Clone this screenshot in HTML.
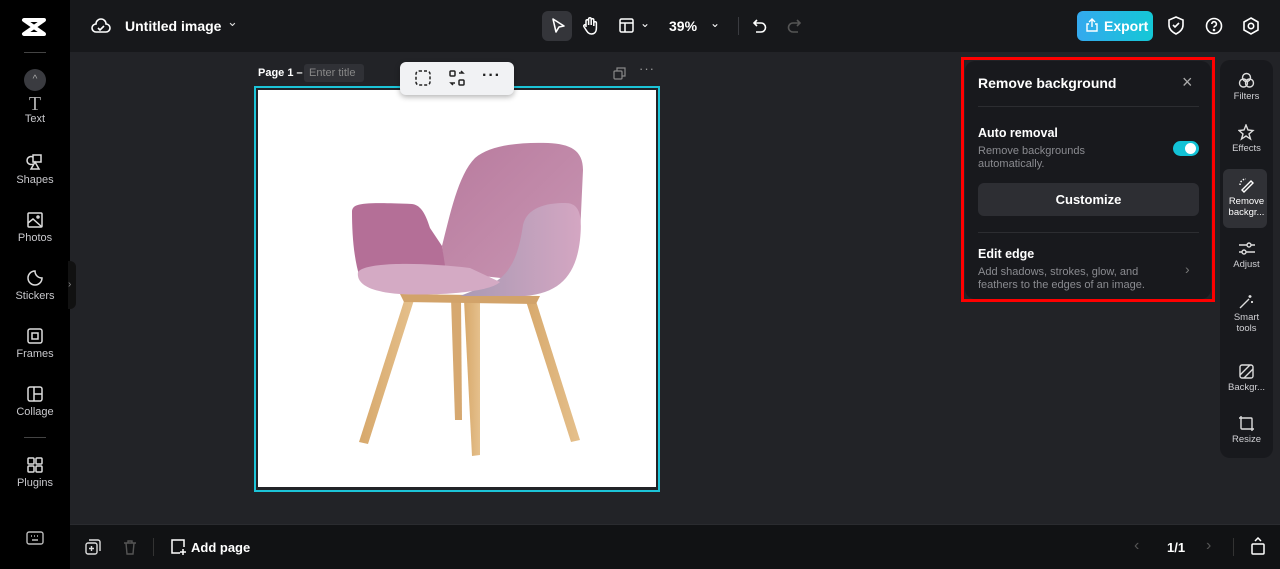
<!DOCTYPE html>
<html><head><meta charset="utf-8"><style>
*{margin:0;padding:0;box-sizing:border-box}
body{width:1280px;height:569px;overflow:hidden;background:#222327;font-family:"Liberation Sans",sans-serif;color:#fff;position:relative}
.abs{position:absolute}
.side{left:0;top:0;width:70px;height:569px;background:#000}
.si{position:absolute;left:0;width:70px;text-align:center;font-size:11px;color:#c8c8cc}
.si svg{display:block;margin:0 auto 3px}
.top{left:70px;top:0;width:1210px;height:52px;background:#17181b}
.bot{left:70px;top:524px;width:1210px;height:45px;background:#111214;border-top:1px solid #2a2b2f}
.panel{left:965px;top:61px;width:246px;height:238px;background:#18191d;border-radius:10px}
.red{left:961px;top:57px;width:254px;height:245px;border:3px solid #f00}
.rt{left:1220px;top:60px;width:53px;height:398px;background:#18191d;border-radius:10px}
.ri{position:absolute;left:0;width:53px;text-align:center;font-size:9.5px;color:#d0d0d4;line-height:11px}
.ri svg{display:block;margin:0 auto 2px}
</style></head><body>
<div class="abs side">
 <svg class="abs" style="left:21px;top:16px" width="26" height="22" viewBox="0 0 26 22"><path d="M3 4 L23 4 L3 18 L23 18 Z" fill="none" stroke="#fff" stroke-width="4" stroke-linejoin="round"/></svg>
 <div class="abs" style="left:24px;top:52px;width:22px;height:1px;background:#444"></div>
 <div class="abs" style="left:24px;top:69px;width:22px;height:22px;border-radius:50%;background:#3a3b40;color:#aaa;font-size:10px;text-align:center;line-height:22px">^</div>
 <div class="si" style="top:95px"><span style="font-family:'Liberation Serif';font-size:20px;color:#aaa;display:block;line-height:18px">T</span>Text</div>
 <div class="si" style="top:153px"><svg width="18" height="18" viewBox="0 0 18 18" fill="none" stroke="#ddd" stroke-width="1.5"><path d="M7 4a4 4 0 1 0 0 7"/><rect x="7" y="2" width="8" height="7"/><path d="M9 9l-4 7h8z"/></svg>Shapes</div>
 <div class="si" style="top:211px"><svg width="18" height="18" viewBox="0 0 18 18" fill="none" stroke="#ddd" stroke-width="1.5"><rect x="2" y="2" width="14" height="14" rx="1"/><path d="M2 12l5-4 9 8"/><circle cx="12" cy="6" r="1"/></svg>Photos</div>
 <div class="si" style="top:269px"><svg width="18" height="18" viewBox="0 0 18 18" fill="none" stroke="#ddd" stroke-width="1.5"><path d="M9 2a7 7 0 1 0 7 7c-4 0-7-3-7-7z"/></svg>Stickers</div>
 <div class="si" style="top:327px"><svg width="18" height="18" viewBox="0 0 18 18" fill="none" stroke="#ddd" stroke-width="1.5"><rect x="2" y="2" width="14" height="14" rx="2"/><rect x="6" y="6" width="6" height="6"/></svg>Frames</div>
 <div class="si" style="top:385px"><svg width="18" height="18" viewBox="0 0 18 18" fill="none" stroke="#ddd" stroke-width="1.5"><rect x="2" y="2" width="14" height="14" rx="2"/><path d="M8 2v14M8 9h8"/></svg>Collage</div>
 <div class="abs" style="left:24px;top:437px;width:22px;height:1px;background:#444"></div>
 <div class="si" style="top:456px"><svg width="18" height="18" viewBox="0 0 18 18" fill="none" stroke="#ddd" stroke-width="1.5"><rect x="2" y="2" width="6" height="6" rx="1"/><rect x="10" y="2" width="6" height="6" rx="1"/><rect x="2" y="10" width="6" height="6" rx="1"/><rect x="10" y="10" width="6" height="6" rx="1"/></svg>Plugins</div>
 <svg class="abs" style="left:26px;top:531px" width="18" height="14" viewBox="0 0 18 14" fill="none" stroke="#bbb" stroke-width="1.4"><rect x="1" y="1" width="16" height="12" rx="2"/><path d="M5 5h1M8 5h1M11 5h1M6 9h6"/></svg>
</div>
<div class="abs" style="left:68px;top:261px;width:8px;height:48px;background:#111;border-radius:0 6px 6px 0;color:#888;font-size:10px;line-height:48px">›</div>
<div class="abs top">
 <svg class="abs" style="left:21px;top:17px" width="20" height="17" viewBox="0 0 20 17" fill="none" stroke="#fff" stroke-width="1.6"><path d="M5 15a4 4 0 0 1 0-8 5 5 0 0 1 10 0 4 4 0 0 1 0 8z"/><path d="M7 11l2 2 4-4"/></svg>
 <div class="abs" style="left:55px;top:18px;font-size:14px;font-weight:bold">Untitled image</div>
 <div class="abs" style="left:157px;top:14px;font-size:13px;color:#ddd">⌄</div>
 <div class="abs" style="left:472px;top:11px;width:30px;height:30px;border-radius:6px;background:#34353a"></div>
 <svg class="abs" style="left:480px;top:17px" width="16" height="17" viewBox="0 0 16 17" fill="none" stroke="#fff" stroke-width="1.6"><path d="M3 2l11 7-5 1-3 5z" stroke-linejoin="round"/></svg>
 <svg class="abs" style="left:512px;top:16px" width="17" height="19" viewBox="0 0 17 19" fill="none" stroke="#fff" stroke-width="1.5"><path d="M4 11V5a1.3 1.3 0 0 1 2.6 0v4V3a1.3 1.3 0 0 1 2.6 0v6V4a1.3 1.3 0 0 1 2.6 0v6V7a1.3 1.3 0 0 1 2.6 0v5c0 4-2 6-5 6-3 0-4-2-6-5l-1.5-2.5a1.2 1.2 0 0 1 2-1.3z"/></svg>
 <svg class="abs" style="left:549px;top:18px" width="15" height="15" viewBox="0 0 15 15" fill="none" stroke="#fff" stroke-width="1.5"><rect x="1" y="1" width="13" height="13" rx="1.5"/><path d="M1 5h13M6 5v9"/></svg>
 <div class="abs" style="left:570px;top:16px;font-size:12px">⌄</div>
 <div class="abs" style="left:599px;top:18px;font-size:14px;font-weight:bold">39%</div>
 <div class="abs" style="left:640px;top:16px;font-size:12px">⌄</div>
 <div class="abs" style="left:668px;top:17px;width:1px;height:18px;background:#3a3b40"></div>
 <svg class="abs" style="left:682px;top:18px" width="16" height="16" viewBox="0 0 16 16" fill="none" stroke="#fff" stroke-width="1.6"><path d="M5 2L2 5l3 3M2 5h7a4.5 4.5 0 0 1 0 9H4"/></svg>
 <svg class="abs" style="left:716px;top:18px" width="16" height="16" viewBox="0 0 16 16" fill="none" stroke="#555" stroke-width="1.6"><path d="M11 2l3 3-3 3M14 5H7a4.5 4.5 0 0 0 0 9h5"/></svg>
 <div class="abs" style="left:1007px;top:11px;width:76px;height:30px;border-radius:6px;background:linear-gradient(90deg,#34a9ee,#14c8d6)"></div>
 <svg class="abs" style="left:1015px;top:18px" width="14" height="14" viewBox="0 0 14 14" fill="none" stroke="#fff" stroke-width="1.4"><path d="M4 6H2v7h10V6h-2M7 9V1M4 4l3-3 3 3"/></svg>
 <div class="abs" style="left:1034px;top:18px;font-size:14px;font-weight:bold">Export</div>
 <svg class="abs" style="left:1097px;top:16px" width="18" height="19" viewBox="0 0 18 19" fill="none" stroke="#fff" stroke-width="1.6"><path d="M9 1l7 3v5c0 4-3 7-7 9-4-2-7-5-7-9V4z"/><path d="M6 9l2 2 4-4"/></svg>
 <svg class="abs" style="left:1135px;top:17px" width="18" height="18" viewBox="0 0 18 18" fill="none" stroke="#fff" stroke-width="1.6"><circle cx="9" cy="9" r="7.5"/><path d="M6.8 7a2.3 2.3 0 1 1 3 2.2c-.6.3-.8.7-.8 1.4"/><circle cx="9" cy="13" r=".5" fill="#fff"/></svg>
 <svg class="abs" style="left:1172px;top:17px" width="18" height="18" viewBox="0 0 18 18" fill="none" stroke="#fff" stroke-width="1.6"><path d="M9 1l7 4v8l-7 4-7-4V5z"/><circle cx="9" cy="9" r="2.7"/></svg>
</div>
<div class="abs" style="left:258px;top:67px;font-size:11px;font-weight:bold">Page 1 –</div>
<div class="abs" style="left:304px;top:64px;width:60px;height:18px;border-radius:3px;background:#303136;color:#888;font-size:11px;line-height:18px;padding-left:5px">Enter title</div>
<svg class="abs" style="left:613px;top:67px" width="13" height="13" viewBox="0 0 13 13" fill="none" stroke="#888" stroke-width="1.2"><rect x="1" y="4" width="8" height="8" rx="1"/><path d="M4 4V1h8v8H9"/></svg>
<div class="abs" style="left:639px;top:61px;color:#999;font-size:13px;letter-spacing:1px">···</div>
<div class="abs" style="left:254px;top:86px;width:406px;height:406px;border:2px solid #1cc4d8"></div>
<div class="abs" style="left:258px;top:90px;width:398px;height:397px;background:#fff"></div>
<svg class="abs" style="left:0;top:0" width="1280" height="569">
 <defs>
  <linearGradient id="pk" x1="0" y1="0" x2="1" y2="1"><stop offset="0" stop-color="#b87b9e"/><stop offset="1" stop-color="#c996b3"/></linearGradient>
  <linearGradient id="pk2" x1="0" y1="0" x2="1" y2="0"><stop offset="0" stop-color="#a99ab4"/><stop offset="1" stop-color="#d4a6c2"/></linearGradient>
  <linearGradient id="wd" x1="0" y1="0" x2="1" y2="0"><stop offset="0" stop-color="#d7a86b"/><stop offset="1" stop-color="#e5c08c"/></linearGradient>
 </defs>
 <path d="M405 298 L414 300 L368 444 L359 442 Z" fill="url(#wd)"/>
 <path d="M525 298 L535 298 L580 440 L571 442 Z" fill="url(#wd)"/>
 <path d="M451 298 L461 298 L462 420 L455 420 Z" fill="#d6a870"/>
 <path d="M464 300 L480 300 L480 455 L472 456 Z" fill="url(#wd)"/>
 <path d="M400 294 L540 296 L536 304 L404 302 Z" fill="#d2a36a"/>
 <path d="M442 246 C450 215 458 175 475 158 C490 145 520 142 548 143 C570 144 583 150 583 170 L580 235 L520 280 L445 272 Z" fill="url(#pk)"/>
 <path d="M352 212 C352 203 362 202 412 204 C420 205 425 212 430 228 L442 246 L446 272 L360 278 C354 260 352 235 352 212 Z" fill="#b46f97"/>
 <path d="M495 282 C515 270 520 245 523 225 C527 208 545 203 565 203 C578 203 583 212 580 240 C576 275 560 293 525 296 L460 296 Z" fill="url(#pk2)"/>
 <path d="M358 272 C365 262 420 262 470 268 L500 282 C490 292 440 296 400 294 C372 292 356 285 358 272 Z" fill="#d4aac4"/>
</svg>
<div class="abs" style="left:400px;top:62px;width:114px;height:33px;background:#f1f2f4;border-radius:6px;box-shadow:0 2px 6px rgba(0,0,0,.3)"></div>
<svg class="abs" style="left:415px;top:70px" width="16" height="16" viewBox="0 0 16 16" fill="none" stroke="#222" stroke-width="1.5" stroke-dasharray="3 2"><rect x="1" y="1" width="14" height="14" rx="3"/></svg>
<svg class="abs" style="left:449px;top:70px" width="16" height="16" viewBox="0 0 16 16" fill="none" stroke="#222" stroke-width="1.5"><rect x="1" y="1" width="5" height="5" rx="1"/><rect x="10" y="10" width="5" height="5" rx="1"/><path d="M10 3h4l-2-2M6 13H2l2 2"/></svg>
<div class="abs" style="left:482px;top:67px;color:#222;font-size:16px;font-weight:bold;letter-spacing:1px">···</div>
<div class="abs panel">
 <div class="abs" style="left:13px;top:14px;font-size:14px;font-weight:bold">Remove background</div>
 <div class="abs" style="left:217px;top:11px;font-size:18px;color:#aaa">×</div>
 <div class="abs" style="left:13px;top:45px;width:221px;height:1px;background:#2c2d31"></div>
 <div class="abs" style="left:13px;top:65px;font-size:12.5px;font-weight:bold">Auto removal</div>
 <div class="abs" style="left:13px;top:84px;font-size:11px;color:#8a8b90;line-height:13px">Remove backgrounds<br>automatically.</div>
 <div class="abs" style="left:208px;top:80px;width:26px;height:15px;border-radius:8px;background:#12c2d6"></div>
 <div class="abs" style="left:220px;top:82px;width:11px;height:11px;border-radius:50%;background:#fff"></div>
 <div class="abs" style="left:13px;top:122px;width:221px;height:33px;border-radius:6px;background:#2d2e33;text-align:center;line-height:33px;font-size:13px;font-weight:bold">Customize</div>
 <div class="abs" style="left:13px;top:171px;width:221px;height:1px;background:#2c2d31"></div>
 <div class="abs" style="left:13px;top:186px;font-size:12.5px;font-weight:bold">Edit edge</div>
 <div class="abs" style="left:13px;top:205px;font-size:11px;color:#8a8b90;line-height:13px">Add shadows, strokes, glow, and<br>feathers to the edges of an image.</div>
 <div class="abs" style="left:220px;top:200px;font-size:14px;color:#777">›</div>
</div>
<div class="abs red"></div>
<div class="abs rt">
 <div class="ri" style="top:12px"><svg width="17" height="17" viewBox="0 0 17 17" fill="none" stroke="#ddd" stroke-width="1.4"><circle cx="8.5" cy="5.5" r="4"/><circle cx="5.5" cy="11" r="4"/><circle cx="11.5" cy="11" r="4"/></svg>Filters</div>
 <div class="ri" style="top:64px"><svg width="17" height="17" viewBox="0 0 17 17" fill="none" stroke="#ddd" stroke-width="1.4"><path d="M8 1l2 5 5 .5-4 3.5 1.5 5L8 12l-4.5 3L5 10 1 6.5 6 6z"/></svg>Effects</div>
 <div class="abs" style="left:3px;top:109px;width:44px;height:59px;border-radius:6px;background:#303136"></div>
 <div class="ri" style="top:117px;color:#fff"><svg width="17" height="17" viewBox="0 0 17 17" fill="none" stroke="#fff" stroke-width="1.4"><path d="M6 15l9-9-2-2-9 9z"/><path d="M2 8a6 6 0 0 1 6-6" stroke-dasharray="1.5 1.5"/></svg>Remove<br>backgr...</div>
 <div class="ri" style="top:180px"><svg width="17" height="17" viewBox="0 0 17 17" fill="none" stroke="#ddd" stroke-width="1.4"><path d="M1 5h16M1 12h16"/><circle cx="11" cy="5" r="2" fill="#18191d"/><circle cx="6" cy="12" r="2" fill="#18191d"/></svg>Adjust</div>
 <div class="ri" style="top:233px"><svg width="17" height="17" viewBox="0 0 17 17" fill="none" stroke="#ddd" stroke-width="1.4"><path d="M2 15l9-9M12 2v3M10.5 3.5h3M14 8v2M13 9h2"/></svg>Smart<br>tools</div>
 <div class="ri" style="top:303px"><svg width="17" height="17" viewBox="0 0 17 17" fill="none" stroke="#ddd" stroke-width="1.4"><rect x="2" y="2" width="13" height="13" rx="2"/><path d="M2 12l10-10M6 15l9-9"/></svg>Backgr...</div>
 <div class="ri" style="top:355px"><svg width="17" height="17" viewBox="0 0 17 17" fill="none" stroke="#ddd" stroke-width="1.4"><rect x="3" y="3" width="11" height="11" rx="1"/><path d="M1 3h2M14 14h2M3 1v2M14 14v2"/></svg>Resize</div>
</div>
<div class="abs bot">
 <svg class="abs" style="left:15px;top:14px" width="16" height="16" viewBox="0 0 16 16" fill="none" stroke="#ddd" stroke-width="1.4"><rect x="1" y="4" width="11" height="11" rx="2"/><path d="M4 1h9a2 2 0 0 1 2 2v9M6.5 7v5M4 9.5h5"/></svg>
 <svg class="abs" style="left:53px;top:14px" width="14" height="16" viewBox="0 0 14 16" fill="none" stroke="#555" stroke-width="1.4"><path d="M1 4h12M5 4V2h4v2M3 4l1 11h6l1-11"/></svg>
 <div class="abs" style="left:83px;top:13px;width:1px;height:18px;background:#333"></div>
 <svg class="abs" style="left:100px;top:13px" width="17" height="18" viewBox="0 0 17 18" fill="none" stroke="#fff" stroke-width="1.5"><path d="M10 15H2V2h12v7"/><path d="M13 11v6M10 14h6"/></svg>
 <div class="abs" style="left:121px;top:15px;font-size:13px;font-weight:bold">Add page</div>
 <div class="abs" style="left:1064px;top:12px;color:#555;font-size:16px">‹</div>
 <div class="abs" style="left:1097px;top:15px;font-size:13px;font-weight:bold">1/1</div>
 <div class="abs" style="left:1136px;top:12px;color:#555;font-size:16px">›</div>
 <div class="abs" style="left:1163px;top:13px;width:1px;height:18px;background:#333"></div>
 <svg class="abs" style="left:1180px;top:12px" width="16" height="18" viewBox="0 0 16 18" fill="none" stroke="#fff" stroke-width="1.5"><rect x="2" y="7" width="12" height="10" rx="1"/><path d="M5 4l3-3 3 3"/></svg>
</div>
</body></html>
